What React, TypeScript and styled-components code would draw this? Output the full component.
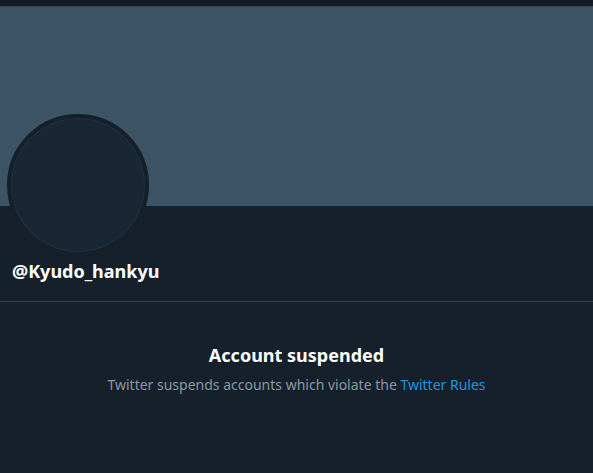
import styled, { createGlobalStyle } from 'styled-components';

const GlobalStyle = createGlobalStyle`
  html, body {
    margin: 0;
    padding: 0;
    background: #15202b;
  }
  body {
    font-family: "Segoe UI", "Noto Sans", Roboto, sans-serif;
    color: #ffffff;
  }
`;

const Page = styled.div`
  width: 593px;
  height: 473px;
  overflow: hidden;
  background: #16202b;
  display: flex;
  flex-direction: column;
`;

const TopBar = styled.div`
  height: 6px;
  background: #141d27;
  border-bottom: 1px solid #38444d;
`;

const Banner = styled.div`
  height: 199px;
  background: #3d5466;
`;

const ProfileHead = styled.div`
  position: relative;
  padding: 0 12px;
  height: 95px;
  border-bottom: 1px solid #38444d;
`;

const Avatar = styled.div`
  position: absolute;
  left: 7px;
  top: -92px;
  width: 134px;
  height: 134px;
  border-radius: 50%;
  border: 4px solid #15202b;
  background: #192734;
  box-shadow: inset 0 0 0 1px #22313f;
`;

const Handle = styled.div`
  padding-top: 53px;
  font-size: 18px;
  font-weight: 700;
  line-height: 24px;
`;

const Notice = styled.div`
  display: flex;
  flex-direction: column;
  align-items: center;
  padding-top: 41px;
`;

const Title = styled.div`
  font-size: 18px;
  font-weight: 700;
  line-height: 24px;
`;

const Subtitle = styled.div`
  margin-top: 8px;
  font-size: 14px;
  line-height: 20px;
  color: #8899a6;
`;

const RulesLink = styled.a`
  color: #1b95e0;
  text-decoration: none;
`;

export default function App() {
  return (
    <>
      <GlobalStyle />
      <Page>
        <TopBar />
        <Banner />
        <ProfileHead>
          <Avatar />
          <Handle>@Kyudo_hankyu</Handle>
        </ProfileHead>
        <Notice>
          <Title>Account suspended</Title>
          <Subtitle>
            Twitter suspends accounts which violate the{' '}
            <RulesLink href="#">Twitter Rules</RulesLink>
          </Subtitle>
        </Notice>
      </Page>
    </>
  );
}
